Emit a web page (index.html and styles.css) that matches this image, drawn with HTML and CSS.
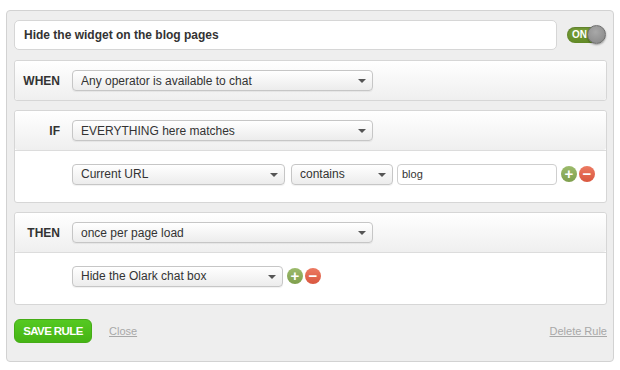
FILE: index.html
```html
<!DOCTYPE html>
<html lang="en">

<head>
    <meta charset="UTF-8">
    <title>Edit Rule</title>
    <link rel="stylesheet" href="styles.css">
</head>

<body>
    <div class="rule">
        <div class="title-row">
            <input type="text" class="rule-name" value="Hide the widget on the blog pages">
            <div class="toggle">
                <span class="toggle-label">ON</span>
                <span class="toggle-knob"></span>
            </div>
        </div>

        <!-- WHEN -->
        <div class="section">
            <div class="section-head">
                <span class="label">WHEN</span>
                <span class="select wide">
                    <select>
                        <option>Any operator is available to chat</option>
                    </select>
                </span>
            </div>
        </div>

        <!-- IF -->
        <div class="section">
            <div class="section-head">
                <span class="label">IF</span>
                <span class="select wide">
                    <select>
                        <option>EVERYTHING here matches</option>
                    </select>
                </span>
            </div>
            <div class="section-row">
                <span class="select field">
                    <select>
                        <option>Current URL</option>
                    </select>
                </span>
                <span class="select operator">
                    <select>
                        <option>contains</option>
                    </select>
                </span>
                <input type="text" class="value" value="blog">
                <button class="circle-btn add">+</button>
                <button class="circle-btn remove">&minus;</button>
            </div>
        </div>

        <!-- THEN -->
        <div class="section">
            <div class="section-head">
                <span class="label">THEN</span>
                <span class="select wide">
                    <select>
                        <option>once per page load</option>
                    </select>
                </span>
            </div>
            <div class="section-row">
                <span class="select action">
                    <select>
                        <option>Hide the Olark chat box</option>
                    </select>
                </span>
                <button class="circle-btn add">+</button>
                <button class="circle-btn remove">&minus;</button>
            </div>
        </div>

        <div class="footer">
            <button class="save-btn">SAVE RULE</button>
            <a href="#" class="link close-link">Close</a>
            <a href="#" class="link delete-link">Delete Rule</a>
        </div>
    </div>
</body>

</html>
```

FILE: styles.css
```css
body {
    margin: 0;
    padding: 10px 6px 0;
    font-family: "Liberation Sans", Arial, sans-serif;
    color: #333;
    background: #fff;
}

.rule {
    width: 608px;
    box-sizing: border-box;
    padding: 9px 6px 18px 7px;
    background-color: #eeeeee;
    border: 1px solid #d2d2d2;
    border-radius: 4px;
}

.title-row {
    display: flex;
    align-items: center;
}

.rule-name {
    flex: 1;
    height: 30px;
    box-sizing: border-box;
    margin: 0;
    padding: 0 9px;
    border: 1px solid #d6d6d6;
    border-radius: 5px;
    background: #fff;
    font-family: inherit;
    font-size: 12px;
    font-weight: bold;
    color: #333;
    outline: none;
}

.toggle {
    position: relative;
    width: 38px;
    height: 16px;
    margin: 0 2px 0 10px;
    border-radius: 9px;
    background: linear-gradient(#7aa23a, #628a26);
    box-shadow: inset 0 1px 2px rgba(0, 0, 0, 0.25);
}

.toggle-label {
    display: block;
    padding-left: 5px;
    line-height: 16px;
    font-size: 10px;
    font-weight: bold;
    color: #fff;
}

.toggle-knob {
    position: absolute;
    top: -2px;
    right: -1px;
    width: 19px;
    height: 19px;
    box-sizing: border-box;
    border-radius: 50%;
    border: 1px solid #6f6f6f;
    background: radial-gradient(circle at 45% 35%, #a8a8a8, #858585);
    box-shadow: 0 1px 2px rgba(0, 0, 0, 0.35);
}

.section {
    margin-top: 9px;
    background: #fff;
    border: 1px solid #d6d6d6;
    border-radius: 3px;
}

.title-row + .section {
    margin-top: 10px;
}

.section-head {
    display: flex;
    align-items: center;
    height: 39px;
    background: linear-gradient(#ffffff, #efefef);
    border-radius: 3px;
}

.section-row {
    display: flex;
    align-items: center;
    height: 52px;
    box-sizing: border-box;
    padding: 0 0 5px 57px;
    border-top: 1px solid #dcdcdc;
}

.label {
    width: 45px;
    margin-right: 12px;
    text-align: right;
    font-size: 12px;
    font-weight: bold;
    color: #333;
}

.select {
    position: relative;
    display: inline-block;
    height: 21px;
}

.select select {
    width: 100%;
    height: 21px;
    margin: 0;
    padding: 0 20px 0 8px;
    appearance: none;
    -webkit-appearance: none;
    border: 1px solid #c6c6c6;
    border-radius: 4px;
    background: linear-gradient(#ffffff, #ececec);
    box-shadow: 0 1px 1px rgba(0, 0, 0, 0.06);
    font-family: inherit;
    font-size: 12px;
    color: #333;
    outline: none;
}

.select::after {
    content: "";
    position: absolute;
    top: 9px;
    right: 7px;
    border-left: 4px solid transparent;
    border-right: 4px solid transparent;
    border-top: 4px solid #555;
    pointer-events: none;
}

.select.wide {
    width: 301px;
}

.select.field {
    width: 213px;
    margin-right: 6px;
}

.select.operator {
    width: 102px;
    margin-right: 4px;
}

.select.action {
    width: 211px;
    margin-right: 4px;
}

.value {
    width: 160px;
    height: 21px;
    box-sizing: border-box;
    margin: 0 4px 0 0;
    padding: 0 4px;
    border: 1px solid #cfcfcf;
    border-radius: 4px;
    font-family: inherit;
    font-size: 11px;
    color: #333;
    outline: none;
}

.circle-btn {
    width: 16px;
    height: 16px;
    margin: 0 2px 0 0;
    padding: 0;
    border: none;
    border-radius: 50%;
    color: #fff;
    font-family: inherit;
    font-size: 15px;
    font-weight: bold;
    line-height: 16px;
    text-align: center;
    cursor: pointer;
}

.circle-btn.add {
    background: linear-gradient(#9cbb6c, #7f9f4d);
}

.circle-btn.remove {
    background: linear-gradient(#ec7a62, #d9573f);
}

.footer {
    display: flex;
    align-items: center;
    margin-top: 14px;
}

.save-btn {
    width: 78px;
    height: 24px;
    padding: 0;
    border: 1px solid #45ac16;
    border-radius: 6px;
    background: linear-gradient(#55c922, #45b414);
    color: #fff;
    font-family: inherit;
    font-size: 11.5px;
    font-weight: bold;
    letter-spacing: -0.6px;
    cursor: pointer;
}

.link {
    font-size: 11px;
    color: #a8a8a8;
    text-decoration: underline;
}

.close-link {
    margin-left: 17px;
}

.delete-link {
    margin-left: auto;
}
```
